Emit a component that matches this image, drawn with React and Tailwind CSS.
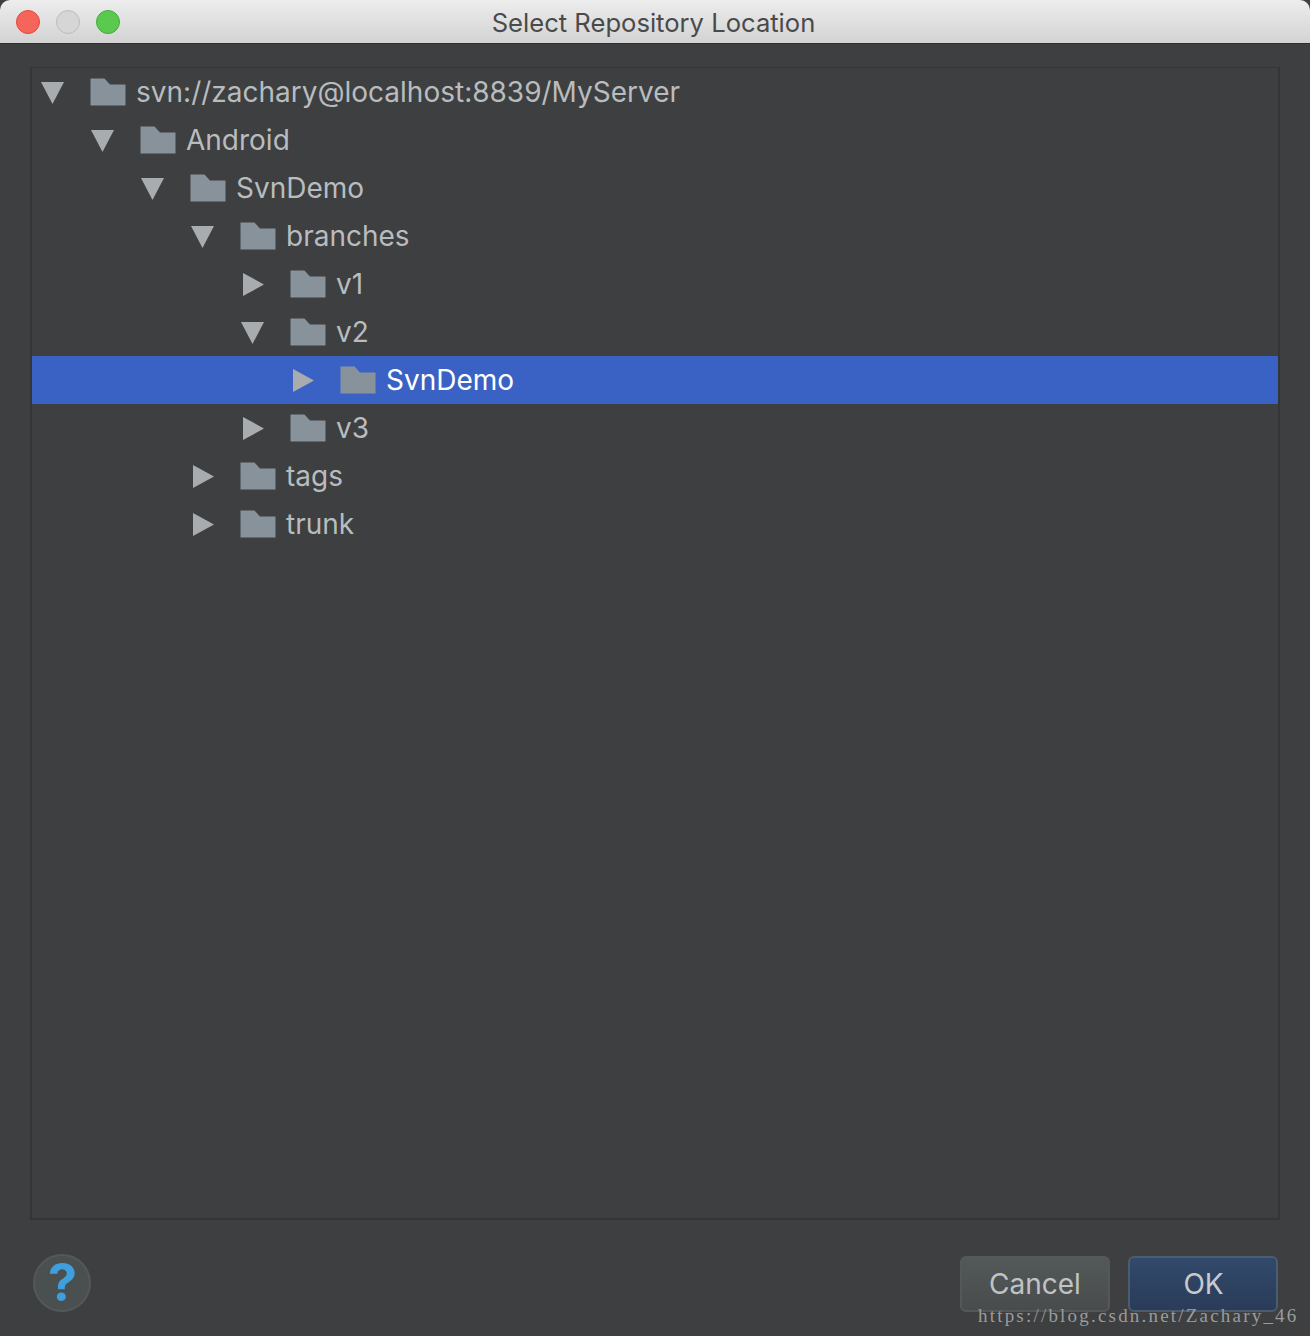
import React from "react";

const rows = [
  { l: 0, t: "svn://zachary@localhost:8839/MyServer", open: true },
  { l: 1, t: "Android", open: true },
  { l: 2, t: "SvnDemo", open: true },
  { l: 3, t: "branches", open: true },
  { l: 4, t: "v1" },
  { l: 4, t: "v2", open: true },
  { l: 5, t: "SvnDemo", sel: true },
  { l: 4, t: "v3" },
  { l: 3, t: "tags" },
  { l: 3, t: "trunk" },
];

function Arrow({ open }) {
  return (
    <svg width="26" height="26" viewBox="0 0 26 26" className="shrink-0">
      {open ? (
        <polygon points="1,3 24,3 12.5,25" fill="#a9acaf" />
      ) : (
        <polygon points="3,2 3,25 24,13.5" fill="#a9acaf" />
      )}
    </svg>
  );
}

function Folder() {
  return (
    <svg width="36" height="28" viewBox="0 0 36 28" className="shrink-0">
      <path d="M0.5 0.5H14.5L20 6.5H35.5V27.5H0.5Z" fill="#87929a" />
    </svg>
  );
}

function Row({ l, t, open, sel }) {
  return (
    <div className={`flex h-12 items-center ${sel ? "bg-[#3a62c4]" : ""}`}>
      <div className="flex items-center" style={{ paddingLeft: 8 + l * 50 }}>
        <Arrow open={open} />
        <div className="ml-6 flex items-center">
          <Folder />
        </div>
        <span className={`ml-[10px] text-[28px] leading-none whitespace-nowrap ${sel ? "text-white" : "text-[#b9bcbe]"}`}>{t}</span>
      </div>
    </div>
  );
}

export default function App() {
  return (
    <div className="relative flex h-[1336px] w-[1310px] flex-col overflow-hidden bg-[#3d3f41] font-['Inter','Liberation_Sans',sans-serif]">
      <div className="relative flex h-[44px] shrink-0 items-center justify-center rounded-t-[10px] border-b border-[#2d2f30] bg-gradient-to-b from-[#ededed] to-[#d3d3d3]">
        <div className="absolute left-4 top-[10px] flex gap-4">
          <div className="h-6 w-6 rounded-full border border-[#e2483f] bg-[#f5655a]" />
          <div className="h-6 w-6 rounded-full border border-[#bdbdbd] bg-[#d6d6d6]" />
          <div className="h-6 w-6 rounded-full border border-[#3fae3b] bg-[#5bc94f]" />
        </div>
        <span className="pr-[3px] pt-[3px] text-[25.6px] leading-none text-[#4a4a4a]">Select Repository Location</span>
      </div>
      <div className="mx-[30px] mt-[23px] h-[1153px] shrink-0 border-x-2 border-t border-b-2 border-[#333537]">
        {rows.map((r, i) => (
          <Row key={i} {...r} />
        ))}
      </div>
      <div className="mt-[34px] flex items-start justify-between pl-[33px] pr-[32px]">
        <div className="flex h-[58px] w-[58px] items-center justify-center rounded-full border-2 border-[#54585a] bg-[#4a4f50] pl-[1px] text-[52px] font-bold leading-none text-[#3f9fdc]">?</div>
        <div className="mt-[2px] flex gap-[18px]">
          <div className="flex h-[56px] w-[150px] items-center justify-center rounded-md border-2 border-[#54585a] bg-gradient-to-b from-[#535859] to-[#484c4d] text-[28px] text-[#c0c3c4]">Cancel</div>
          <div className="flex h-[56px] w-[150px] items-center justify-center rounded-md border-2 border-[#4b5c70] bg-gradient-to-b from-[#32496b] to-[#2a3c58] pl-[1px] text-[28px] text-[#c8cbcd]">OK</div>
        </div>
      </div>
      <div className="absolute left-[978px] top-[1306px] text-[19px] leading-none whitespace-nowrap tracking-[2.2px] text-[#9a9c9d] font-['Liberation_Serif',serif]">https://blog.csdn.net/Zachary_46</div>
    </div>
  );
}
